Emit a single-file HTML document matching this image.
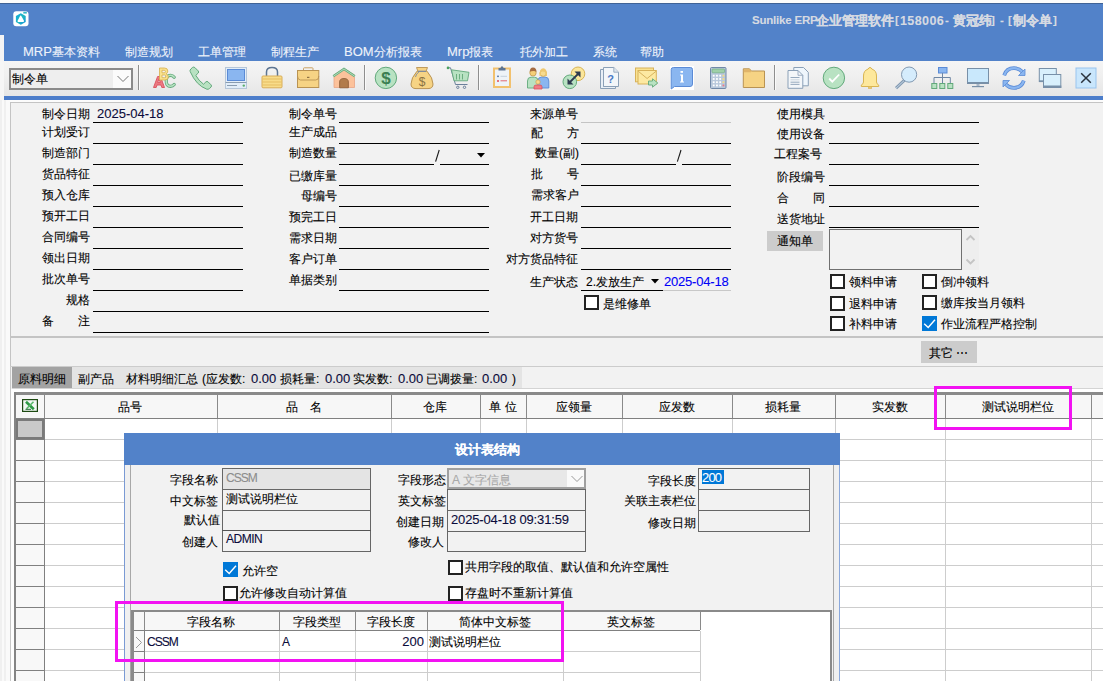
<!DOCTYPE html>
<html><head><meta charset="utf-8"><style>
html,body{margin:0;padding:0}
body{width:1103px;height:681px;overflow:hidden;position:relative;background:#f0f0f0;font-family:"Liberation Sans",sans-serif;font-size:12px;color:#000}
body>div{position:absolute}
.t{line-height:20px;white-space:nowrap;font-size:12px;-webkit-text-stroke:0.1px}
.n{font-size:13px;color:#0b0b3a}
</style></head><body>
<div style="left:0px;top:0px;width:1103px;height:3px;background:#fbfbfb"></div>
<div style="left:0px;top:3px;width:1103px;height:1px;background:#3f6296"></div>
<div style="left:0px;top:4px;width:1103px;height:57px;background:#5282c9"></div>
<div style="left:0px;top:35px;width:4px;height:26px;background:#f4f4f4"></div>
<svg style="position:absolute;left:13px;top:11px" width="16" height="16" viewBox="0 0 16 16">
<defs><linearGradient id="hg" x1="0" y1="0" x2="1" y2="1"><stop offset="0" stop-color="#12a8e0"/><stop offset="0.5" stop-color="#20b8c0"/><stop offset="1" stop-color="#1890e0"/></linearGradient></defs>
<rect x="0.3" y="0.3" width="15.2" height="15" rx="3" fill="#fff"/>
<polygon points="7.8,2.3 12.7,5.1 12.7,10.9 7.8,13.7 2.9,10.9 2.9,5.1" fill="url(#hg)"/>
<path d="M7.6,4.6 Q8.2,4.6 8.6,5.4 L11,9.8 Q11.3,10.8 10.3,10.9 L5.2,10.9 Q4.2,10.8 4.6,9.8 L6.8,5.4 Q7.1,4.6 7.6,4.6 Z" fill="#fff"/>
<rect x="10.3" y="0.8" width="3.5" height="1.8" fill="#3ab8c8"/>
</svg>
<div class="t" style="left:752px;top:10px;color:#d6dae2;font-weight:bold;font-size:11.5px;letter-spacing:-0.2px">Sunlike ERP</div>
<div class="t" style="left:816px;top:11px;color:#d6dae2;font-weight:bold;font-size:13px">企业管理软件</div>
<div class="t" style="left:895px;top:10px;color:#d6dae2;font-weight:bold;font-size:11.5px">[</div>
<div class="t" style="left:900px;top:11px;color:#d6dae2;font-weight:bold;font-size:12.5px;letter-spacing:0.4px">158006</div>
<div class="t" style="left:945px;top:10px;color:#d6dae2;font-weight:bold;font-size:11.5px">-</div>
<div class="t" style="left:953px;top:11px;color:#d6dae2;font-weight:bold;font-size:13px">黄冠纬</div>
<div class="t" style="left:991px;top:10px;color:#d6dae2;font-weight:bold;font-size:11.5px">]</div>
<div class="t" style="left:1000px;top:10px;color:#d6dae2;font-weight:bold;font-size:11.5px">-</div>
<div class="t" style="left:1008px;top:10px;color:#d6dae2;font-weight:bold;font-size:11.5px">[</div>
<div class="t" style="left:1013px;top:11px;color:#d6dae2;font-weight:bold;font-size:13px">制令单</div>
<div class="t" style="left:1053px;top:10px;color:#d6dae2;font-weight:bold;font-size:11.5px">]</div>
<div class="t" style="left:23px;top:42px;color:#eef2fa"><span style='font-size:13px'>MRP</span>基本资料</div>
<div class="t" style="left:125px;top:42px;color:#eef2fa">制造规划</div>
<div class="t" style="left:198px;top:42px;color:#eef2fa">工单管理</div>
<div class="t" style="left:271px;top:42px;color:#eef2fa">制程生产</div>
<div class="t" style="left:344px;top:42px;color:#eef2fa"><span style='font-size:13px'>BOM</span>分析报表</div>
<div class="t" style="left:447px;top:42px;color:#eef2fa"><span style='font-size:13px'>Mrp</span>报表</div>
<div class="t" style="left:520px;top:42px;color:#eef2fa">托外加工</div>
<div class="t" style="left:593px;top:42px;color:#eef2fa">系统</div>
<div class="t" style="left:640px;top:42px;color:#eef2fa">帮助</div>
<div style="left:0px;top:61px;width:1103px;height:35px;background:linear-gradient(#f5f5f5,#f0f0f0 40%,#e6e6e6)"></div>
<div style="left:0px;top:61px;width:4px;height:35px;background:#f4f4f4"></div>
<div style="left:4px;top:96px;width:1099px;height:4px;background:#4c7dca"></div>
<div style="left:0px;top:61px;width:4px;height:620px;background:#f6f6f6"></div>
<div style="left:0px;top:100px;width:1103px;height:2px;background:#fcfcfc"></div>
<div style="left:9px;top:68px;width:124px;height:22px;box-sizing:border-box;border:2px solid #8a8a8a;background:#eeeeee"></div>
<div style="left:113px;top:70px;width:18px;height:18px;background:#fbfbfb"></div>
<div class="t" style="left:12px;top:69px;font-size:12px;color:#000">制令单</div>
<svg style="position:absolute;left:117px;top:75px" width="12" height="8"><polyline points="0.5,1 6,6.5 11.5,1" fill="none" stroke="#777" stroke-width="1"/></svg>
<div style="left:138px;top:65px;width:1px;height:25px;background:#8e8e8e"></div>
<div style="left:139px;top:65px;width:1px;height:25px;background:#fafafa"></div>
<div style="left:364px;top:65px;width:1px;height:25px;background:#8e8e8e"></div>
<div style="left:365px;top:65px;width:1px;height:25px;background:#fafafa"></div>
<div style="left:478px;top:65px;width:1px;height:25px;background:#8e8e8e"></div>
<div style="left:479px;top:65px;width:1px;height:25px;background:#fafafa"></div>
<div style="left:774px;top:65px;width:1px;height:25px;background:#8e8e8e"></div>
<div style="left:775px;top:65px;width:1px;height:25px;background:#fafafa"></div>
<svg style="position:absolute;left:0;top:0" width="1103" height="100" viewBox="0 0 1103 100"><path d="M174.2,77.2 Q172.8,75.3 170.5,75.3 Q166.2,75.3 166.2,80.8 Q166.2,86.3 170.5,86.3 Q172.8,86.3 174.2,84.5" fill="none" stroke="#62a97b" stroke-width="3.2" stroke-linecap="round"/><path d="M174.2,77.2 Q172.8,75.3 170.5,75.3 Q166.2,75.3 166.2,80.8 Q166.2,86.3 170.5,86.3 Q172.8,86.3 174.2,84.5" fill="none" stroke="#b8e2c2" stroke-width="1.6" stroke-linecap="round"/><path d="M153.5,87.5 L157.6,76.5 L160.4,76.5 L164.5,87.5 L161.8,87.5 L161,85 L157,85 L156.2,87.5 Z M157.7,82.6 L160.3,82.6 L159,78.8 Z" fill="#ec7a82" stroke="#d9505e" stroke-width="0.9" fill-rule="evenodd"/><path d="M159.5,68 L164.5,68 Q167.8,68 167.8,71 Q167.8,73.2 166,73.8 Q168.3,74.6 168.3,77 Q168.3,80 164.8,80 L159.5,80 Z M162,70.3 L162,72.8 L164.2,72.8 Q165.4,72.8 165.4,71.5 Q165.4,70.3 164.2,70.3 Z M162,75 L162,77.7 L164.6,77.7 Q165.9,77.7 165.9,76.3 Q165.9,75 164.6,75 Z" fill="#f9e28e" stroke="#d7ae4e" stroke-width="0.8" fill-rule="evenodd"/><path d="M190.2,71.6 Q189.6,70.2 190.8,69 L192.6,67.4 Q193.8,66.6 194.9,67.6 L198.2,70.9 Q199.2,72 198.2,73.1 L195.8,75.4 Q198.6,80.6 203.5,84.2 L205.9,81.9 Q207,80.9 208.1,81.9 L211.1,84.9 Q212,86 211,87.1 L209.4,88.6 Q208.2,89.6 206.8,89.2 Q196.2,85.4 190.2,71.6 Z" fill="#b8e2c2" stroke="#62a97b" stroke-width="1" stroke-linejoin="round"/><rect x="225.5" y="67.5" width="21" height="21" fill="#e2edf8" stroke="#b6c6d8" stroke-width="1"/><rect x="227.5" y="69.5" width="17" height="11" fill="#8ab6f0" stroke="#5b8bd6" stroke-width="1"/><line x1="225.5" y1="82.5" x2="246.5" y2="82.5" stroke="#8a9cb0" stroke-width="1"/><line x1="227" y1="85.5" x2="237" y2="85.5" stroke="#8a9cb0" stroke-width="1"/><circle cx="243.8" cy="85.6" r="1.2" fill="#5aae6a"/><path d="M266.5,76 L266.5,72 Q266.5,67.5 272,67.5 Q277.5,67.5 277.5,72 L277.5,76" fill="none" stroke="#5d7592" stroke-width="1.5"/><rect x="262" y="76" width="20" height="11.8" rx="1" fill="#f8dc8a" stroke="#d9ad58" stroke-width="1"/><line x1="262.5" y1="79" x2="281.5" y2="79" stroke="#e6bd62" stroke-width="1"/><line x1="262.5" y1="82" x2="281.5" y2="82" stroke="#e6bd62" stroke-width="1"/><line x1="262.5" y1="85" x2="281.5" y2="85" stroke="#e6bd62" stroke-width="1"/><path d="M303.5,70.5 L303.5,68.5 Q303.5,67.8 304.3,67.8 L312.2,67.8 Q313,67.8 313,68.5 L313,70.5" fill="none" stroke="#c9a264" stroke-width="1"/><rect x="297.5" y="70.5" width="21.3" height="17" fill="#f6d384" stroke="#b99353" stroke-width="1"/><path d="M297.5,76 Q297.5,80 300.5,80 L315.8,80 Q318.8,80 318.8,76" fill="none" stroke="#b99353" stroke-width="0.9"/><rect x="307" y="76.8" width="2.4" height="1.2" fill="#8f7244"/><path d="M334,87.5 L334,75 L344,68.5 L354.5,75 L354.5,87.5 Z" fill="#fcc29b" stroke="#e8a585" stroke-width="0.8"/><path d="M333.3,76.3 L344,69 L354.8,76.3" fill="none" stroke="#67ad7e" stroke-width="2.4"/><path d="M333.3,76.3 L344,69 L354.8,76.3" fill="none" stroke="#b9e1c2" stroke-width="0.9"/><path d="M339.6,87.8 L339.6,82 Q339.6,78.5 344,78.5 Q348.4,78.5 348.4,82 L348.4,87.8 Z" fill="#b27b4b" stroke="#8a5a35" stroke-width="0.8"/><circle cx="385.9" cy="77.9" r="10.7" fill="#b8e2c2" stroke="#62a97b" stroke-width="1"/><text x="385.9" y="84.2" text-anchor="middle" font-family="Liberation Sans" font-weight="bold" font-size="17" fill="#3b7f52">$</text><path d="M417,71.2 Q411,78 411,84 Q411,88.6 416,88.6 L428,88.6 Q433,88.6 433,84 Q433,78 427,71.2 Z" fill="#f6d384" stroke="#b99353" stroke-width="1"/><path d="M416.5,67.5 L427.5,67.5 L426,71.5 L418,71.5 Z" fill="#f6d384" stroke="#b99353" stroke-width="0.9"/><path d="M418,71.3 L426,71.3" stroke="#7c8aa0" stroke-width="1.2"/><path d="M419,71.8 Q416,74 415.5,77" fill="none" stroke="#7c8aa0" stroke-width="0.9"/><text x="422" y="86.2" text-anchor="middle" font-family="Liberation Sans" font-size="12" fill="#8b7243">$</text><path d="M448,67.8 L450.5,67.8 L455.5,84.5 L467.5,84.5" fill="none" stroke="#6a7f9a" stroke-width="1"/><circle cx="448" cy="67.9" r="1.3" fill="#4da160"/><path d="M451.5,69.8 L469,72.3 L467.5,80.8 L454,80.8 Z" fill="#b8e2c2" stroke="#62a97b" stroke-width="0.9"/><line x1="456.5" y1="74" x2="456.5" y2="79.5" stroke="#6cae80" stroke-width="1"/><line x1="459.5" y1="74" x2="459.5" y2="79.5" stroke="#6cae80" stroke-width="1"/><line x1="462.5" y1="74" x2="462.5" y2="79.5" stroke="#6cae80" stroke-width="1"/><circle cx="457.8" cy="87.3" r="1.2" fill="none" stroke="#6a7f9a" stroke-width="1"/><circle cx="464.5" cy="87.3" r="1.2" fill="none" stroke="#6a7f9a" stroke-width="1"/><rect x="494" y="68.5" width="16" height="18.5" fill="#eef3f8" stroke="#f2c16e" stroke-width="2"/><path d="M498.5,70.5 L498.5,68 L500.5,68 Q500.8,66.2 502,66.2 Q503.2,66.2 503.5,68 L505.5,68 L505.5,70.5 Z" fill="#5e7592"/><rect x="497" y="75.6" width="2" height="1.5" fill="#6a86ae"/><line x1="500.5" y1="76.3" x2="507" y2="76.3" stroke="#c4d0dc" stroke-width="1"/><rect x="497" y="80.2" width="2" height="1.6" fill="#e05560"/><line x1="500.5" y1="80.8" x2="507" y2="80.8" stroke="#e06570" stroke-width="1"/><path d="M527.5,88 L527.5,81 Q527.5,77.2 531,77.2 L534.5,77.2 Q538,77.2 538,81 L538,88 Z" fill="#b8e2c2" stroke="#62a97b" stroke-width="0.9"/><path d="M538,88 L538,81 Q538,77 541.5,77 L545,77 Q548.8,77 548.8,81 L548.8,88 Z" fill="#8ab6f0" stroke="#5b8bd6" stroke-width="0.9"/><circle cx="533" cy="72.8" r="3.2" fill="#f5cf78" stroke="#c09a50" stroke-width="0.8"/><path d="M529.7,72.3 Q529.7,67.5 533,67.5 Q536.5,67.5 536.5,72 Q535,70.5 530,71.5 Z" fill="#a56c42"/><circle cx="543.2" cy="73.2" r="3.2" fill="#f8dc90" stroke="#c9a050" stroke-width="0.8"/><path d="M539.5,76 Q539.2,68.2 543.3,68.2 Q547.2,68.2 547,76 L545.5,76 L545.5,72 Q542,71 541,72 L541,76 Z" fill="#efc870"/><path d="M534,89 L534,86.8 Q534,85 536,85 L540,85 Q542,85 542,86.8 L542,89 Z" fill="#ef7b84" stroke="#d9505e" stroke-width="0.8"/><circle cx="538" cy="82" r="2.2" fill="#f8d68c" stroke="#c9a050" stroke-width="0.7"/><circle cx="578" cy="73.8" r="6.8" fill="#fbe69a" stroke="#d8b455" stroke-width="1"/><circle cx="569.8" cy="81.8" r="6.8" fill="#b8e2c2" stroke="#62a97b" stroke-width="1"/><path d="M569,83 L579,73" stroke="#2e3b4f" stroke-width="1.8"/><path d="M574.5,71.5 L580.5,71.5 L580.5,77.5 Z M567.5,78.5 L567.5,84.5 L573.5,84.5 Z" fill="#2e3b4f"/><path d="M600.5,69.5 L603.5,69.5 L603.5,86.5 L615.5,86.5 L615.5,88.5 L600.5,88.5 Z" fill="#e9eff6" stroke="#8ba0b7" stroke-width="1"/><path d="M603.5,67.5 L613.8,67.5 L618.5,72.2 L618.5,86.5 L603.5,86.5 Z" fill="#f3f6f9" stroke="#8ba0b7" stroke-width="1"/><path d="M613.8,67.5 L613.8,72.2 L618.5,72.2" fill="#dfe6ee" stroke="#8ba0b7" stroke-width="0.8"/><text x="610.7" y="82.5" text-anchor="middle" font-family="Liberation Sans" font-weight="bold" font-size="11" fill="#4a79c6">?</text><rect x="635.5" y="68" width="18" height="13.8" fill="#f9e292" stroke="#d8b25a" stroke-width="1"/><rect x="638" y="70.5" width="18.3" height="13.5" fill="#fde9a2" stroke="#d8b25a" stroke-width="1"/><path d="M638.3,71.3 L647.1,78.5 L656,71.3" fill="none" stroke="#d3ad55" stroke-width="0.9"/><path d="M648.5,81 L652.5,81 L652.5,78.8 L657.8,83 L652.5,87.2 L652.5,85 L648.5,85 Z" fill="#b8e2c2" stroke="#62a97b" stroke-width="0.9"/><rect x="670" y="66" width="24" height="24" fill="#ffffff"/><path d="M673.5,67.5 L690.5,67.5 Q692.5,67.5 692.5,69.5 L692.5,84 Q692.5,86.5 690,86.5 L674.5,86.5 L671.2,89 L671.2,69.5 Q671.2,67.5 673.5,67.5 Z" fill="#8ab6f0" stroke="#5b8bd6" stroke-width="1"/><rect x="680.5" y="71" width="2.5" height="1.8" fill="#fff"/><path d="M680,74.5 L683,74.5 L683,81.5 L684,81.5 L684,82.4 L680,82.4 L680,81.5 L681,81.5 L681,75.4 L680,75.4 Z" fill="#fff"/><rect x="710.5" y="67.5" width="15.5" height="21" rx="1" fill="#b9c9dc" stroke="#7189a8" stroke-width="1"/><rect x="712" y="69" width="12.5" height="3.8" rx="0.8" fill="#9fd0a8" stroke="#6ca97b" stroke-width="0.6"/><rect x="712.80" y="74.80" width="1.8" height="1.8" fill="#ffffff"/><rect x="716.05" y="74.80" width="1.8" height="1.8" fill="#ffffff"/><rect x="719.30" y="74.80" width="1.8" height="1.8" fill="#ffffff"/><rect x="722.55" y="74.80" width="1.8" height="1.8" fill="#f6dc80"/><rect x="712.80" y="78.05" width="1.8" height="1.8" fill="#ffffff"/><rect x="716.05" y="78.05" width="1.8" height="1.8" fill="#ffffff"/><rect x="719.30" y="78.05" width="1.8" height="1.8" fill="#ffffff"/><rect x="722.55" y="78.05" width="1.8" height="1.8" fill="#f6dc80"/><rect x="712.80" y="81.30" width="1.8" height="1.8" fill="#ffffff"/><rect x="716.05" y="81.30" width="1.8" height="1.8" fill="#ffffff"/><rect x="719.30" y="81.30" width="1.8" height="1.8" fill="#ffffff"/><rect x="722.55" y="81.30" width="1.8" height="1.8" fill="#f6dc80"/><rect x="712.80" y="84.55" width="1.8" height="1.8" fill="#ffffff"/><rect x="716.05" y="84.55" width="1.8" height="1.8" fill="#ffffff"/><rect x="719.30" y="84.55" width="1.8" height="1.8" fill="#ffffff"/><rect x="722.55" y="84.55" width="1.8" height="1.8" fill="#ef7b84"/><path d="M743.3,87.5 L743.3,68.8 L749.5,68.8 L751.3,71 L764.5,71 L764.5,87.5 Z" fill="#f6d384" stroke="#b99353" stroke-width="1"/><path d="M743.8,69.3 L749.3,69.3 L751,71.5 L751,72.3 L743.8,72.3 Z" fill="#e0b46a"/><path d="M793.8,67.5 L803.5,67.5 L808.3,72.3 L808.3,85.8 L793.8,85.8 Z" fill="#eff6fc" stroke="#8ba0b7" stroke-width="1"/><path d="M788,70.5 L798,70.5 L802.8,75.3 L802.8,88.3 L788,88.3 Z" fill="#f3f6f9" stroke="#8ba0b7" stroke-width="1"/><path d="M798,70.5 L798,75.3 L802.8,75.3" fill="none" stroke="#8ba0b7" stroke-width="0.8"/><line x1="790.5" y1="77.5" x2="799.5" y2="77.5" stroke="#8ba0b7" stroke-width="0.9"/><line x1="790.5" y1="79.8" x2="799.5" y2="79.8" stroke="#c6d2de" stroke-width="0.9"/><line x1="790.5" y1="82.2" x2="799.5" y2="82.2" stroke="#8ba0b7" stroke-width="0.9"/><line x1="790.5" y1="84.4" x2="799.5" y2="84.4" stroke="#8ba0b7" stroke-width="0.9"/><circle cx="833.9" cy="77.9" r="10.7" fill="#b8e2c2" stroke="#62a97b" stroke-width="1"/><path d="M829.2,78.5 L832.3,81.7 L839.2,74.5" fill="none" stroke="#fff" stroke-width="1.8"/><path d="M870,67.5 Q871.2,67.5 871.8,69 Q876.5,70.5 876.5,76 L876.5,82 Q876.5,84 878.7,85 L878.7,86.5 L861.3,86.5 L861.3,85 Q863.5,84 863.5,82 L863.5,76 Q863.5,70.5 868.2,69 Q868.8,67.5 870,67.5 Z" fill="#fde89c" stroke="#d9b552" stroke-width="1"/><rect x="868.3" y="86.5" width="3.4" height="2" fill="#e7c870" stroke="#d9b552" stroke-width="0.6"/><line x1="904.5" y1="80.2" x2="896" y2="88.2" stroke="#8299b1" stroke-width="3"/><line x1="904.5" y1="80.2" x2="896" y2="88.2" stroke="#c9d9e8" stroke-width="1"/><circle cx="909.1" cy="74.6" r="7.6" fill="#d5ecfc" stroke="#8299b1" stroke-width="1"/><rect x="938.5" y="67.5" width="8.5" height="5.5" fill="#8ab6f0" stroke="#5b8bd6" stroke-width="1"/><path d="M942.5,73 L942.5,83 M934,83 L934,77.5 L950.3,77.5 L950.3,83" fill="none" stroke="#6e86a4" stroke-width="1"/><rect x="931.8" y="83.5" width="5" height="5" fill="#b8e2c2" stroke="#62a97b" stroke-width="1"/><rect x="939.8" y="83.5" width="5" height="5" fill="#b8e2c2" stroke="#62a97b" stroke-width="1"/><rect x="947.8" y="83.5" width="5" height="5" fill="#b8e2c2" stroke="#62a97b" stroke-width="1"/><rect x="967.5" y="68.5" width="21" height="15" fill="#c9e8fc" stroke="#7890a8" stroke-width="1"/><rect x="967" y="82" width="22" height="2" fill="#7890a8"/><rect x="976.5" y="84" width="3" height="2.5" fill="#a9b8c8"/><rect x="972" y="86" width="12" height="1.2" fill="#7890a8"/><path d="M1004.2,75.3 Q1006.5,68.2 1014,68.2 Q1019,68.2 1022.3,71.8" fill="none" stroke="#5b8bd6" stroke-width="3.8"/><path d="M1004.2,75.3 Q1006.5,68.2 1014,68.2 Q1019,68.2 1022.3,71.8" fill="none" stroke="#8ab6f0" stroke-width="2.2"/><path d="M1018.5,75.5 L1025,75.5 L1025,69 Z" fill="#8ab6f0" stroke="#5b8bd6" stroke-width="0.8"/><path d="M1023.8,80.7 Q1021.5,87.8 1014,87.8 Q1009,87.8 1005.7,84.2" fill="none" stroke="#5b8bd6" stroke-width="3.8"/><path d="M1023.8,80.7 Q1021.5,87.8 1014,87.8 Q1009,87.8 1005.7,84.2" fill="none" stroke="#8ab6f0" stroke-width="2.2"/><path d="M1009.5,80.5 L1003,80.5 L1003,87 Z" fill="#8ab6f0" stroke="#5b8bd6" stroke-width="0.8"/><rect x="1039.3" y="68.5" width="17" height="13" fill="#d9f0fc" stroke="#7890a8" stroke-width="1"/><rect x="1039" y="80.3" width="5" height="1.8" fill="#7890a8"/><rect x="1043.5" y="74.5" width="17.3" height="13" fill="#d9f0fc" stroke="#7890a8" stroke-width="1"/><rect x="1043" y="85.5" width="18.3" height="2.4" fill="#7890a8"/><rect x="1076" y="68" width="20" height="20" fill="#c9e6fc" stroke="#99c4ee" stroke-width="1"/><path d="M1081.2,73.2 L1090.8,82.8 M1090.8,73.2 L1081.2,82.8" stroke="#2b333d" stroke-width="1.5"/></svg>
<div style="left:0px;top:100px;width:10px;height:581px;background:#fafafa"></div>
<div style="left:0px;top:100px;width:2px;height:581px;background:#f0f0f0"></div>
<div style="left:4px;top:100px;width:2px;height:581px;background:#f0f0f0"></div>
<div style="left:10px;top:102px;width:1093px;height:234px;box-sizing:border-box;background:#f2f2f2;border-top:1px solid #c4c4c4;border-left:1px solid #c4c4c4"></div>
<div style="left:10px;top:336px;width:1093px;height:2px;background:#c4c4c4"></div>
<div style="left:10px;top:338px;width:1093px;height:28px;box-sizing:border-box;background:#f2f2f2;border-left:1px solid #c4c4c4"></div>
<div style="left:10px;top:366px;width:1093px;height:2px;background:#cccccc"></div>
<div style="left:921px;top:341px;width:56px;height:22px;background:#cccccc"></div>
<div class="t" style="left:929px;top:343px;color:#000">其它 ⋯</div>
<div class="t" style="left:-110px;top:104px;width:200px;text-align:right;">制令日期</div>
<div style="left:93px;top:122px;width:150px;height:1px;background:#000"></div>
<div class="t" style="left:-110px;top:122px;width:200px;text-align:right;">计划受订</div>
<div style="left:93px;top:143px;width:150px;height:1px;background:#000"></div>
<div class="t" style="left:-110px;top:143px;width:200px;text-align:right;">制造部门</div>
<div style="left:93px;top:164px;width:150px;height:1px;background:#000"></div>
<div class="t" style="left:-110px;top:164px;width:200px;text-align:right;">货品特征</div>
<div style="left:93px;top:185px;width:150px;height:1px;background:#000"></div>
<div class="t" style="left:-110px;top:185px;width:200px;text-align:right;">预入仓库</div>
<div style="left:93px;top:206px;width:150px;height:1px;background:#000"></div>
<div class="t" style="left:-110px;top:206px;width:200px;text-align:right;">预开工日</div>
<div style="left:93px;top:227px;width:150px;height:1px;background:#000"></div>
<div class="t" style="left:-110px;top:227px;width:200px;text-align:right;">合同编号</div>
<div style="left:93px;top:248px;width:150px;height:1px;background:#000"></div>
<div class="t" style="left:-110px;top:248px;width:200px;text-align:right;">领出日期</div>
<div style="left:93px;top:269px;width:150px;height:1px;background:#000"></div>
<div class="t" style="left:-110px;top:269px;width:200px;text-align:right;">批次单号</div>
<div style="left:93px;top:290px;width:150px;height:1px;background:#000"></div>
<div class="t" style="left:-110px;top:290px;width:200px;text-align:right;">规格</div>
<div style="left:93px;top:311px;width:396px;height:1px;background:#000"></div>
<div class="t" style="left:42px;top:311px;">备</div>
<div class="t" style="left:78px;top:311px;">注</div>
<div style="left:93px;top:332px;width:396px;height:1px;background:#000"></div>
<div class="t" style="left:97px;top:104px;font-size:13px;color:#0b0b3a">2025-04-18</div>
<div class="t" style="left:137px;top:104px;width:200px;text-align:right;">制令单号</div>
<div style="left:339px;top:122px;width:150px;height:1px;background:#000"></div>
<div class="t" style="left:137px;top:122px;width:200px;text-align:right;">生产成品</div>
<div style="left:339px;top:143px;width:150px;height:1px;background:#000"></div>
<div class="t" style="left:137px;top:143px;width:200px;text-align:right;">制造数量</div>
<div style="left:339px;top:164px;width:95px;height:1px;background:#000"></div>
<div style="left:440px;top:164px;width:49px;height:1px;background:#000"></div>
<div class="t" style="left:137px;top:166px;width:200px;text-align:right;">已缴库量</div>
<div style="left:339px;top:185px;width:150px;height:1px;background:#000"></div>
<div class="t" style="left:137px;top:186px;width:200px;text-align:right;">母编号</div>
<div style="left:339px;top:206px;width:150px;height:1px;background:#000"></div>
<div class="t" style="left:137px;top:207px;width:200px;text-align:right;">预完工日</div>
<div style="left:339px;top:227px;width:150px;height:1px;background:#000"></div>
<div class="t" style="left:137px;top:228px;width:200px;text-align:right;">需求日期</div>
<div style="left:339px;top:248px;width:150px;height:1px;background:#000"></div>
<div class="t" style="left:137px;top:249px;width:200px;text-align:right;">客户订单</div>
<div style="left:339px;top:269px;width:150px;height:1px;background:#000"></div>
<div class="t" style="left:137px;top:270px;width:200px;text-align:right;">单据类别</div>
<div style="left:339px;top:290px;width:150px;height:1px;background:#000"></div>
<svg style="position:absolute;left:430px;top:146px" width="14" height="20"><line x1="5.6" y1="15.6" x2="9.2" y2="4" stroke="#1a1a1a" stroke-width="1.1"/></svg>
<svg style="position:absolute;left:477px;top:153px" width="8" height="5"><polygon points="0,0 8,0 4,4.5" fill="#000"/></svg>
<div class="t" style="left:378px;top:104px;width:200px;text-align:right;">来源单号</div>
<div class="t" style="left:379px;top:123px;width:200px;text-align:right;">配　　方</div>
<div class="t" style="left:379px;top:143px;width:200px;text-align:right;">数量(副)</div>
<div class="t" style="left:379px;top:164px;width:200px;text-align:right;">批　　号</div>
<div class="t" style="left:379px;top:185px;width:200px;text-align:right;">需求客户</div>
<div class="t" style="left:378px;top:207px;width:200px;text-align:right;">开工日期</div>
<div class="t" style="left:378px;top:228px;width:200px;text-align:right;">对方货号</div>
<div class="t" style="left:378px;top:249px;width:200px;text-align:right;">对方货品特征</div>
<div class="t" style="left:378px;top:272px;width:200px;text-align:right;">生产状态</div>
<div style="left:581px;top:143px;width:150px;height:1px;background:#000"></div>
<div style="left:581px;top:164px;width:95px;height:1px;background:#000"></div>
<div style="left:682px;top:164px;width:49px;height:1px;background:#000"></div>
<div style="left:581px;top:185px;width:150px;height:1px;background:#000"></div>
<div style="left:581px;top:206px;width:150px;height:1px;background:#000"></div>
<div style="left:581px;top:227px;width:150px;height:1px;background:#000"></div>
<div style="left:581px;top:248px;width:150px;height:1px;background:#000"></div>
<div style="left:581px;top:269px;width:150px;height:1px;background:#000"></div>
<div style="left:581px;top:122px;width:150px;height:1px;background:#c4c4c4"></div>
<svg style="position:absolute;left:672px;top:146px" width="14" height="20"><line x1="5.4" y1="15.6" x2="9" y2="4" stroke="#1a1a1a" stroke-width="1.1"/></svg>
<div style="left:581px;top:290px;width:82px;height:1px;background:#000"></div>
<div style="left:663px;top:290px;width:68px;height:1px;background:#c8c8c8"></div>
<div class="t" style="left:586px;top:272px;color:#000">2.发放生产</div>
<svg style="position:absolute;left:651px;top:279px" width="8" height="5"><polygon points="0,0 8,0 4,4.5" fill="#000"/></svg>
<div class="t" style="left:664px;top:272px;font-size:13px;color:#0000f8;letter-spacing:-0.2px">2025-04-18</div>
<div style="left:584px;top:295px;width:15px;height:15px;box-sizing:border-box;border:2px solid #222;background:#fff"></div>
<div class="t" style="left:603px;top:294px;">是维修单</div>
<div class="t" style="left:625px;top:104px;width:200px;text-align:right;">使用模具</div>
<div style="left:829px;top:122px;width:150px;height:1px;background:#000"></div>
<div class="t" style="left:625px;top:124px;width:200px;text-align:right;">使用设备</div>
<div style="left:829px;top:143px;width:150px;height:1px;background:#000"></div>
<div class="t" style="left:622px;top:144px;width:200px;text-align:right;">工程案号</div>
<div style="left:829px;top:164px;width:150px;height:1px;background:#000"></div>
<div class="t" style="left:625px;top:167px;width:200px;text-align:right;">阶段编号</div>
<div style="left:829px;top:185px;width:150px;height:1px;background:#000"></div>
<div class="t" style="left:625px;top:188px;width:200px;text-align:right;">合　　同</div>
<div style="left:829px;top:206px;width:150px;height:1px;background:#000"></div>
<div class="t" style="left:625px;top:209px;width:200px;text-align:right;">送货地址</div>
<div style="left:829px;top:227px;width:150px;height:1px;background:#000"></div>
<div style="left:767px;top:231px;width:56px;height:20px;background:#cccccc"></div>
<div class="t" style="left:777px;top:231px;">通知单</div>
<div style="left:829px;top:229px;width:133px;height:41px;box-sizing:border-box;border:1px solid #707070;background:#f2f2f2"></div>
<div style="left:962px;top:229px;width:17px;height:41px;background:#eeeeee"></div>
<svg style="position:absolute;left:965px;top:234px" width="12" height="32"><polyline points="1.5,6 5.5,2 9.5,6" fill="none" stroke="#c4c4c4" stroke-width="1.8"/><polyline points="1.5,25.5 5.5,29.5 9.5,25.5" fill="none" stroke="#c4c4c4" stroke-width="1.8"/></svg>
<div style="left:830px;top:274px;width:15px;height:15px;box-sizing:border-box;border:2px solid #222;background:#fff"></div>
<div class="t" style="left:849px;top:272px;">领料申请</div>
<div style="left:830px;top:296px;width:15px;height:15px;box-sizing:border-box;border:2px solid #222;background:#fff"></div>
<div class="t" style="left:849px;top:294px;">退料申请</div>
<div style="left:830px;top:316px;width:15px;height:15px;box-sizing:border-box;border:2px solid #222;background:#fff"></div>
<div class="t" style="left:849px;top:314px;">补料申请</div>
<div style="left:922px;top:274px;width:15px;height:15px;box-sizing:border-box;border:2px solid #222;background:#fff"></div>
<div class="t" style="left:941px;top:272px;">倒冲领料</div>
<div style="left:922px;top:295px;width:15px;height:15px;box-sizing:border-box;border:2px solid #222;background:#fff"></div>
<div class="t" style="left:941px;top:293px;">缴库按当月领料</div>
<div style="left:922px;top:316px;width:15px;height:15px;background:#0078d7"></div>
<svg style="position:absolute;left:922px;top:316px" width="15" height="15"><polyline points="2.2,7.8 6.2,11.5 13,3.8" fill="none" stroke="#fff" stroke-width="1.4"/></svg>
<div class="t" style="left:941px;top:314px;">作业流程严格控制</div>
<div style="left:10px;top:367px;width:1093px;height:314px;background:#f2f2f2"></div>
<div style="left:10px;top:367px;width:1px;height:314px;background:#c8c8c8"></div>
<div style="left:11px;top:389px;width:3px;height:292px;background:#ffffff"></div>
<div style="left:12px;top:367px;width:510px;height:22px;background:#e4e4e4"></div>
<div style="left:12px;top:367px;width:60px;height:22px;background:#a3a3a3"></div>
<div class="t" style="left:18px;top:369px;">原料明细</div>
<div class="t" style="left:78px;top:369px;">副产品</div>
<div class="t" style="left:126px;top:369px;">材料明细汇总</div>
<div class="t" style="left:202px;top:369px;">(应发数:</div>
<div class="t" style="left:280px;top:369px;">损耗量:</div>
<div class="t" style="left:353px;top:369px;">实发数:</div>
<div class="t" style="left:426px;top:369px;">已调拨量:</div>
<div class="t" style="left:251px;top:369px;font-size:13px;color:#0b0b3a">0.00</div>
<div class="t" style="left:325px;top:369px;font-size:13px;color:#0b0b3a">0.00</div>
<div class="t" style="left:398px;top:369px;font-size:13px;color:#0b0b3a">0.00</div>
<div class="t" style="left:482px;top:369px;font-size:13px;color:#0b0b3a">0.00</div>
<div class="t" style="left:512px;top:369px;">)</div>
<div style="left:12px;top:388px;width:1091px;height:1px;background:#d4d4d4"></div>
<div style="left:12px;top:389px;width:1091px;height:3px;background:#ffffff"></div>
<div style="left:14px;top:392px;width:1089px;height:289px;background:#fff"></div>
<div style="left:14px;top:392px;width:1089px;height:3px;background:#8a8a8a"></div>
<div style="left:14px;top:392px;width:2px;height:289px;background:#858585"></div>
<div style="left:16px;top:395px;width:1087px;height:23px;background:#f7f7f7"></div>
<div style="left:16px;top:418px;width:1087px;height:1px;background:#808080"></div>
<div style="left:44px;top:394px;width:1px;height:24px;background:#8a8a8a"></div>
<div style="left:217px;top:394px;width:1px;height:24px;background:#8a8a8a"></div>
<div style="left:391px;top:394px;width:1px;height:24px;background:#8a8a8a"></div>
<div style="left:480px;top:394px;width:1px;height:24px;background:#8a8a8a"></div>
<div style="left:526px;top:394px;width:1px;height:24px;background:#8a8a8a"></div>
<div style="left:622px;top:394px;width:1px;height:24px;background:#8a8a8a"></div>
<div style="left:732px;top:394px;width:1px;height:24px;background:#8a8a8a"></div>
<div style="left:835px;top:394px;width:1px;height:24px;background:#8a8a8a"></div>
<div style="left:945px;top:394px;width:1px;height:24px;background:#8a8a8a"></div>
<div style="left:1091px;top:394px;width:1px;height:24px;background:#8a8a8a"></div>
<div style="left:217px;top:419px;width:1px;height:262px;background:#cdcdcd"></div>
<div style="left:391px;top:419px;width:1px;height:262px;background:#cdcdcd"></div>
<div style="left:480px;top:419px;width:1px;height:262px;background:#cdcdcd"></div>
<div style="left:526px;top:419px;width:1px;height:262px;background:#cdcdcd"></div>
<div style="left:622px;top:419px;width:1px;height:262px;background:#cdcdcd"></div>
<div style="left:732px;top:419px;width:1px;height:262px;background:#cdcdcd"></div>
<div style="left:835px;top:419px;width:1px;height:262px;background:#cdcdcd"></div>
<div style="left:945px;top:419px;width:1px;height:262px;background:#cdcdcd"></div>
<div style="left:1091px;top:419px;width:1px;height:262px;background:#cdcdcd"></div>
<div style="left:44px;top:419px;width:1px;height:262px;background:#808080"></div>
<div style="left:16px;top:419px;width:28px;height:262px;background:#f8f8f8"></div>
<div style="left:45px;top:439px;width:1058px;height:1px;background:#cdcdcd"></div>
<div style="left:16px;top:439px;width:28px;height:1px;background:#808080"></div>
<div style="left:45px;top:460px;width:1058px;height:1px;background:#cdcdcd"></div>
<div style="left:16px;top:460px;width:28px;height:1px;background:#808080"></div>
<div style="left:45px;top:481px;width:1058px;height:1px;background:#cdcdcd"></div>
<div style="left:16px;top:481px;width:28px;height:1px;background:#808080"></div>
<div style="left:45px;top:502px;width:1058px;height:1px;background:#cdcdcd"></div>
<div style="left:16px;top:502px;width:28px;height:1px;background:#808080"></div>
<div style="left:45px;top:523px;width:1058px;height:1px;background:#cdcdcd"></div>
<div style="left:16px;top:523px;width:28px;height:1px;background:#808080"></div>
<div style="left:45px;top:544px;width:1058px;height:1px;background:#cdcdcd"></div>
<div style="left:16px;top:544px;width:28px;height:1px;background:#808080"></div>
<div style="left:45px;top:565px;width:1058px;height:1px;background:#cdcdcd"></div>
<div style="left:16px;top:565px;width:28px;height:1px;background:#808080"></div>
<div style="left:45px;top:586px;width:1058px;height:1px;background:#cdcdcd"></div>
<div style="left:16px;top:586px;width:28px;height:1px;background:#808080"></div>
<div style="left:45px;top:607px;width:1058px;height:1px;background:#cdcdcd"></div>
<div style="left:16px;top:607px;width:28px;height:1px;background:#808080"></div>
<div style="left:45px;top:628px;width:1058px;height:1px;background:#cdcdcd"></div>
<div style="left:16px;top:628px;width:28px;height:1px;background:#808080"></div>
<div style="left:45px;top:649px;width:1058px;height:1px;background:#cdcdcd"></div>
<div style="left:16px;top:649px;width:28px;height:1px;background:#808080"></div>
<div style="left:45px;top:670px;width:1058px;height:1px;background:#cdcdcd"></div>
<div style="left:16px;top:670px;width:28px;height:1px;background:#808080"></div>
<div style="left:16px;top:419px;width:28px;height:20px;box-sizing:border-box;border:2px solid #7a7a7a;background:#c9c9c9"></div>
<div class="t" style="left:30.0px;top:397px;width:200px;text-align:center;">品号</div>
<div class="t" style="left:204.0px;top:397px;width:200px;text-align:center;">品　名</div>
<div class="t" style="left:335.0px;top:397px;width:200px;text-align:center;">仓库</div>
<div class="t" style="left:403.0px;top:397px;width:200px;text-align:center;">单 位</div>
<div class="t" style="left:474.0px;top:397px;width:200px;text-align:center;">应领量</div>
<div class="t" style="left:577.0px;top:397px;width:200px;text-align:center;">应发数</div>
<div class="t" style="left:683.0px;top:397px;width:200px;text-align:center;">损耗量</div>
<div class="t" style="left:790.0px;top:397px;width:200px;text-align:center;">实发数</div>
<div class="t" style="left:918.0px;top:397px;width:200px;text-align:center;">测试说明栏位</div>
<svg style="position:absolute;left:22px;top:399px" width="16" height="13"><rect x="0.6" y="0.6" width="14.8" height="11.8" fill="#f2f8f4" stroke="#1d4a12" stroke-width="1.2"/><path d="M4,2.8 L11.8,10.2" stroke="#2e9a45" stroke-width="2.6"/><path d="M11.5,2.8 L4.5,9.8" stroke="#58b86a" stroke-width="1.6"/><path d="M3.5,10.3 L9,10.3" stroke="#1e6a30" stroke-width="1"/></svg>
<div style="left:934px;top:386px;width:138px;height:44px;box-sizing:border-box;border:3px solid #f212f2"></div>
<div style="left:124px;top:433px;width:716px;height:248px;background:#f0f0f0;border-left:1px solid #7a9ad4;border-right:1px solid #8aa8dc;box-sizing:border-box"></div>
<div style="left:124px;top:433px;width:716px;height:32px;background:#5282c9"></div>
<div class="t" style="left:455px;top:440px;color:#fff;font-weight:bold;font-size:13px">设计表结构</div>
<div style="left:130px;top:465px;width:1px;height:216px;background:#a8a8a8"></div>
<div style="left:131px;top:465px;width:703px;height:216px;background:#f2f2f2"></div>
<div style="left:833px;top:465px;width:1px;height:216px;background:#a8a8a8"></div>
<div class="t" style="left:18px;top:470px;width:200px;text-align:right;">字段名称</div>
<div class="t" style="left:18px;top:491px;width:200px;text-align:right;">中文标签</div>
<div class="t" style="left:20px;top:510px;width:200px;text-align:right;">默认值</div>
<div class="t" style="left:18px;top:532px;width:200px;text-align:right;">创建人</div>
<div style="left:222px;top:468px;width:149px;height:22px;box-sizing:border-box;border:1px solid #666;background:#e4e4e4"></div>
<div style="left:222px;top:489px;width:149px;height:22px;box-sizing:border-box;border:1px solid #666;background:#f2f2f2"></div>
<div style="left:222px;top:510px;width:149px;height:21px;box-sizing:border-box;border:1px solid #666;background:#f2f2f2"></div>
<div style="left:222px;top:530px;width:149px;height:22px;box-sizing:border-box;border:1px solid #666;background:#f2f2f2"></div>
<div style="left:222px;top:530px;width:149px;height:1px;background:#555"></div>
<div class="t" style="left:226px;top:468px;font-size:12px;color:#8c8c8c;letter-spacing:-1px">CSSM</div>
<div class="t" style="left:226px;top:489px;">测试说明栏位</div>
<div class="t" style="left:226px;top:529px;font-size:12px;color:#0b0b3a;letter-spacing:-0.5px">ADMIN</div>
<div class="t" style="left:246px;top:470px;width:200px;text-align:right;">字段形态</div>
<div class="t" style="left:246px;top:491px;width:200px;text-align:right;">英文标签</div>
<div class="t" style="left:244px;top:512px;width:200px;text-align:right;">创建日期</div>
<div class="t" style="left:244px;top:532px;width:200px;text-align:right;">修改人</div>
<div style="left:447px;top:468px;width:139px;height:21px;box-sizing:border-box;border:2px solid #a0a0a0;background:#e8e8e8"></div>
<div style="left:567px;top:470px;width:17px;height:17px;background:#fafafa"></div>
<div class="t" style="left:452px;top:470px;color:#a8a8a8">A 文字信息</div>
<svg style="position:absolute;left:571px;top:475px" width="12" height="8"><polyline points="0.5,1 6,6.5 11.5,1" fill="none" stroke="#999" stroke-width="1"/></svg>
<div style="left:447px;top:489px;width:139px;height:22px;box-sizing:border-box;border:1px solid #666;background:#f2f2f2"></div>
<div style="left:447px;top:510px;width:139px;height:22px;box-sizing:border-box;border:1px solid #666;background:#f2f2f2"></div>
<div style="left:447px;top:531px;width:139px;height:21px;box-sizing:border-box;border:1px solid #666;background:#f2f2f2"></div>
<div class="t" style="left:451px;top:510px;font-size:13px;color:#0b0b3a;letter-spacing:-0.15px">2025-04-18 09:31:59</div>
<div class="t" style="left:496px;top:471px;width:200px;text-align:right;">字段长度</div>
<div class="t" style="left:496px;top:491px;width:200px;text-align:right;">关联主表栏位</div>
<div class="t" style="left:496px;top:513px;width:200px;text-align:right;">修改日期</div>
<div style="left:698px;top:468px;width:112px;height:22px;box-sizing:border-box;border:1px solid #666;background:#f2f2f2"></div>
<div style="left:698px;top:489px;width:112px;height:22px;box-sizing:border-box;border:1px solid #666;background:#f2f2f2"></div>
<div style="left:698px;top:510px;width:112px;height:22px;box-sizing:border-box;border:1px solid #666;background:#f2f2f2"></div>
<div style="left:702px;top:470px;width:22px;height:14px;background:#0078d7"></div>
<div class="t" style="left:702px;top:468px;font-size:13px;color:#fff;letter-spacing:-0.8px">200</div>
<div style="left:223px;top:562px;width:15px;height:15px;background:#0078d7"></div>
<svg style="position:absolute;left:223px;top:562px" width="15" height="15"><polyline points="2.2,7.8 6.2,11.5 13,3.8" fill="none" stroke="#fff" stroke-width="1.4"/></svg>
<div class="t" style="left:242px;top:561px;">允许空</div>
<div style="left:223px;top:586px;width:15px;height:15px;box-sizing:border-box;border:2px solid #222;background:#fff"></div>
<div class="t" style="left:239px;top:583px;">允许修改自动计算值</div>
<div style="left:448px;top:560px;width:15px;height:15px;box-sizing:border-box;border:2px solid #222;background:#fff"></div>
<div class="t" style="left:465px;top:557px;">共用字段的取值、默认值和允许空属性</div>
<div style="left:448px;top:586px;width:15px;height:15px;box-sizing:border-box;border:2px solid #222;background:#fff"></div>
<div class="t" style="left:465px;top:583px;">存盘时不重新计算值</div>
<div style="left:131px;top:610px;width:701px;height:71px;background:#fff"></div>
<div style="left:131px;top:610px;width:701px;height:2px;background:#8a8a8a"></div>
<div style="left:131px;top:610px;width:3px;height:71px;background:#8a8a8a"></div>
<div style="left:830px;top:610px;width:2px;height:71px;background:#8a8a8a"></div>
<div style="left:134px;top:612px;width:566px;height:18px;background:#f7f7f7"></div>
<div style="left:134px;top:630px;width:566px;height:1px;background:#808080"></div>
<div style="left:144px;top:612px;width:1px;height:18px;background:#8a8a8a"></div>
<div style="left:279px;top:612px;width:1px;height:18px;background:#8a8a8a"></div>
<div style="left:355px;top:612px;width:1px;height:18px;background:#8a8a8a"></div>
<div style="left:427px;top:612px;width:1px;height:18px;background:#8a8a8a"></div>
<div style="left:563px;top:612px;width:1px;height:18px;background:#8a8a8a"></div>
<div style="left:700px;top:612px;width:1px;height:18px;background:#8a8a8a"></div>
<div style="left:279px;top:631px;width:1px;height:50px;background:#cdcdcd"></div>
<div style="left:355px;top:631px;width:1px;height:50px;background:#cdcdcd"></div>
<div style="left:427px;top:631px;width:1px;height:50px;background:#cdcdcd"></div>
<div style="left:563px;top:631px;width:1px;height:50px;background:#cdcdcd"></div>
<div style="left:700px;top:631px;width:1px;height:50px;background:#cdcdcd"></div>
<div style="left:144px;top:631px;width:1px;height:50px;background:#808080"></div>
<div style="left:134px;top:631px;width:10px;height:50px;background:#f8f8f8"></div>
<div style="left:145px;top:651px;width:555px;height:1px;background:#cdcdcd"></div>
<div style="left:134px;top:651px;width:10px;height:1px;background:#808080"></div>
<div style="left:145px;top:672px;width:555px;height:1px;background:#cdcdcd"></div>
<div style="left:134px;top:672px;width:10px;height:1px;background:#808080"></div>
<div class="t" style="left:111.0px;top:612px;width:200px;text-align:center;">字段名称</div>
<div class="t" style="left:217.0px;top:612px;width:200px;text-align:center;">字段类型</div>
<div class="t" style="left:291.0px;top:612px;width:200px;text-align:center;">字段长度</div>
<div class="t" style="left:395.0px;top:612px;width:200px;text-align:center;">简体中文标签</div>
<div class="t" style="left:531.0px;top:612px;width:200px;text-align:center;">英文标签</div>
<svg style="position:absolute;left:135px;top:636px" width="8" height="13"><polyline points="1,1 6.5,6.5 1,12" fill="none" stroke="#999" stroke-width="1"/></svg>
<div class="t" style="left:147px;top:632px;font-size:12px;color:#0b0b3a;letter-spacing:-1px">CSSM</div>
<div class="t" style="left:282px;top:632px;font-size:12px;color:#0b0b3a">A</div>
<div class="t" style="left:224px;top:632px;width:200px;text-align:right;font-size:13px;color:#0b0b3a">200</div>
<div class="t" style="left:429px;top:632px;">测试说明栏位</div>
<div style="left:115px;top:601px;width:449px;height:61px;box-sizing:border-box;border:3px solid #f212f2"></div>
</body></html>
